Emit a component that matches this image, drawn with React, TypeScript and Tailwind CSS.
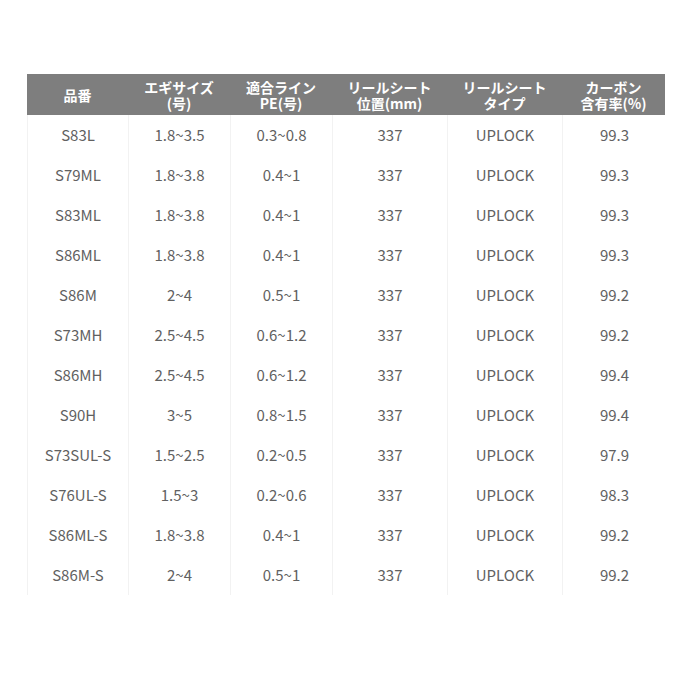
import React from 'react';

const rows = [
  ['S83L', '1.8~3.5', '0.3~0.8', '337', 'UPLOCK', '99.3'],
  ['S79ML', '1.8~3.8', '0.4~1', '337', 'UPLOCK', '99.3'],
  ['S83ML', '1.8~3.8', '0.4~1', '337', 'UPLOCK', '99.3'],
  ['S86ML', '1.8~3.8', '0.4~1', '337', 'UPLOCK', '99.3'],
  ['S86M', '2~4', '0.5~1', '337', 'UPLOCK', '99.2'],
  ['S73MH', '2.5~4.5', '0.6~1.2', '337', 'UPLOCK', '99.2'],
  ['S86MH', '2.5~4.5', '0.6~1.2', '337', 'UPLOCK', '99.4'],
  ['S90H', '3~5', '0.8~1.5', '337', 'UPLOCK', '99.4'],
  ['S73SUL-S', '1.5~2.5', '0.2~0.5', '337', 'UPLOCK', '97.9'],
  ['S76UL-S', '1.5~3', '0.2~0.6', '337', 'UPLOCK', '98.3'],
  ['S86ML-S', '1.8~3.8', '0.4~1', '337', 'UPLOCK', '99.2'],
  ['S86M-S', '2~4', '0.5~1', '337', 'UPLOCK', '99.2'],
];

const headers = [
  ['品番'],
  ['エギサイズ', '(号)'],
  ['適合ライン', 'PE(号)'],
  ['リールシート', '位置(mm)'],
  ['リールシート', 'タイプ'],
  ['カーボン', '含有率(%)'],
];

const cols = 'grid grid-cols-[101px_102px_102px_115px_115px_103px]';

const App: React.FC = () => {
  return (
    <div
      className="w-[680px] h-[680px] bg-white pt-[74px] pl-[27px]"
      style={{ fontFamily: '"Noto Sans CJK JP", "Noto Sans", sans-serif' }}
    >
      <div className="w-[638px]">
        {/* Header */}
        <div className={`${cols} h-[41px] bg-[#7e7e7e] text-white font-bold text-[14px] leading-[16px]`}>
          {headers.map((h, i) => (
            <div key={i} className="flex flex-col items-center justify-center">
              {h.map((line) => (
                <span key={line}>{line}</span>
              ))}
            </div>
          ))}
        </div>

        {/* Body */}
        <div className="border-l border-[#f2f2f2]">
          {rows.map((r) => (
            <div key={r[0]} className={`${cols} h-[40px] text-[#616161] text-[15px]`}>
              {r.map((c, i) => (
                <div
                  key={i}
                  className={`flex items-center justify-center ${i < 5 ? 'border-r border-[#f2f2f2]' : ''}`}
                >
                  {c}
                </div>
              ))}
            </div>
          ))}
        </div>
      </div>
    </div>
  );
};

export default App;
